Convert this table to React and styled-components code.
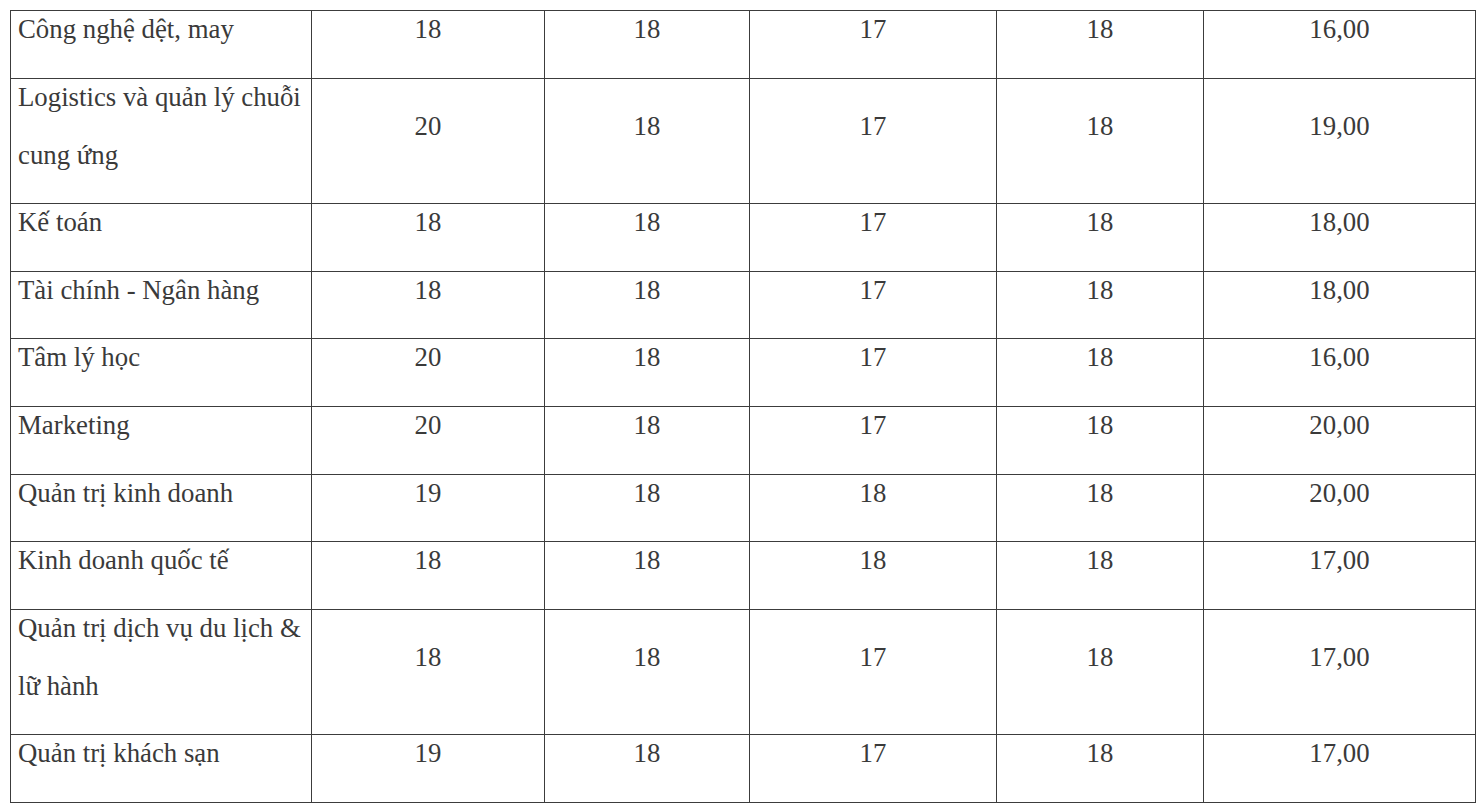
import React from 'react';
import styled, { createGlobalStyle } from 'styled-components';

const rows = [
  ['Công nghệ dệt, may', '18', '18', '17', '18', '16,00'],
  ['Logistics và quản lý chuỗi cung ứng', '20', '18', '17', '18', '19,00'],
  ['Kế toán', '18', '18', '17', '18', '18,00'],
  ['Tài chính - Ngân hàng', '18', '18', '17', '18', '18,00'],
  ['Tâm lý học', '20', '18', '17', '18', '16,00'],
  ['Marketing', '20', '18', '17', '18', '20,00'],
  ['Quản trị kinh doanh', '19', '18', '18', '18', '20,00'],
  ['Kinh doanh quốc tế', '18', '18', '18', '18', '17,00'],
  ['Quản trị dịch vụ du lịch & lữ hành', '18', '18', '17', '18', '17,00'],
  ['Quản trị khách sạn', '19', '18', '17', '18', '17,00'],
];

const widths = [301, 233, 205, 247, 207, 272];

const GlobalStyle = createGlobalStyle`
  body {
    margin: 0;
    background: #ffffff;
  }
`;

const Page = styled.div`
  padding: 10px 4px 0 10px;
`;

const Table = styled.table`
  border-collapse: collapse;
  table-layout: fixed;
  width: 1466px;
  font-family: 'Liberation Serif', 'Times New Roman', serif;
  font-size: 26.8px;
  color: #3a3a3a;
`;

const Cell = styled.td`
  border: 1px solid #3c3c3c;
  padding: 0 ${props => (props.$name ? '2px' : '10px')} 19.6px ${props => (props.$name ? '7px' : '10px')};
  text-align: ${props => (props.$name ? 'left' : 'center')};
  vertical-align: middle;
`;

const CellText = styled.div`
  line-height: 58px;
  margin-top: -11px;
`;

export default function App() {
  return (
    <>
      <GlobalStyle />
      <Page>
        <Table>
          <colgroup>
            {widths.map((w, i) => (
              <col key={i} style={{ width: w }} />
            ))}
          </colgroup>
          <tbody>
            {rows.map((row, r) => (
              <tr key={r}>
                {row.map((value, c) => (
                  <Cell key={c} $name={c === 0}>
                    <CellText>{value}</CellText>
                  </Cell>
                ))}
              </tr>
            ))}
          </tbody>
        </Table>
      </Page>
    </>
  );
}
